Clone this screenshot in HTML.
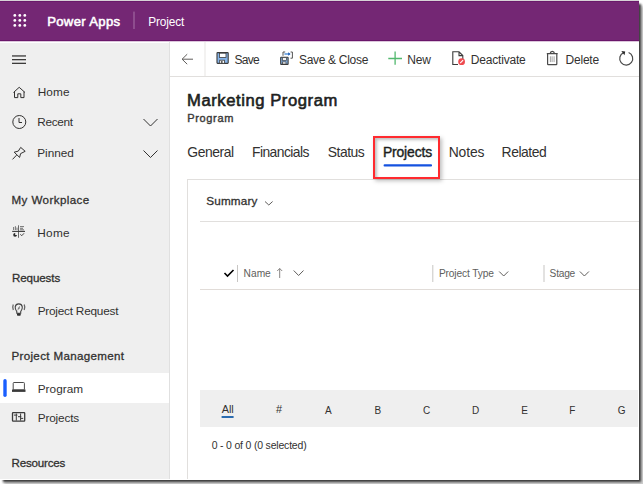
<!DOCTYPE html>
<html><head><meta charset="utf-8">
<style>
*{margin:0;padding:0;box-sizing:border-box}
html,body{width:643px;height:484px;overflow:hidden;background:#fff}
body{font-family:"Liberation Sans",sans-serif;position:relative;color:#323130}
.a{position:absolute;white-space:nowrap}
.tx{line-height:1}
.bl{display:inline-block;width:0;height:0}
svg{overflow:visible}
/*MEASURE*/
</style></head><body>
<!-- page shadow -->
<div class="a nt" style="left:4px;top:6px;width:643px;height:484px;background:#cdcdcd;filter:blur(1.5px)"></div>
<div class="a nt" style="left:3px;top:4px;width:638px;height:478px;background:#383838;filter:blur(1.2px)"></div>
<div class="a" style="left:0;top:0;width:639px;height:480px;background:#fff"></div>
<!-- backgrounds -->
<div class="a" style="left:0;top:0;width:639px;height:1px;background:#d6d2d6"></div>
<div class="a" style="left:0;top:1px;width:639px;height:40px;background:#742774"></div>
<div class="a" style="left:0;top:1px;width:639px;height:1px;background:#6a1a6a"></div>
<div class="a" style="left:0;top:40px;width:639px;height:1px;background:#6a166a"></div>
<div class="a" style="left:0;top:41px;width:639px;height:1px;background:#dcc6dc"></div>
<div class="a" style="left:0;top:43px;width:170px;height:436px;background:#efefef"></div>
<div class="a" style="left:169px;top:42px;width:1px;height:437px;background:#e0e0e0"></div>
<div class="a" style="left:0;top:373px;width:169px;height:30px;background:#fff"></div>
<div class="a" style="left:200px;top:390px;width:438px;height:37px;background:#efefef"></div>

<!-- non-text -->
<div class="nt">
<svg class="a" style="left:0;top:0" width="643" height="484" viewBox="0 0 643 484">
 <!-- waffle -->
 <g fill="#fff">
  <circle cx="14.8" cy="15.4" r="1.4"/><circle cx="19.8" cy="15.4" r="1.4"/><circle cx="24.8" cy="15.4" r="1.4"/>
  <circle cx="14.8" cy="20.4" r="1.4"/><circle cx="19.8" cy="20.4" r="1.4"/><circle cx="24.8" cy="20.4" r="1.4"/>
  <circle cx="14.8" cy="25.4" r="1.4"/><circle cx="19.8" cy="25.4" r="1.4"/><circle cx="24.8" cy="25.4" r="1.4"/>
 </g>
 <rect x="133.3" y="11.6" width="1.4" height="17.4" fill="#9a5f9a"/>
 <!-- hamburger -->
 <g fill="#3b3a39">
  <rect x="12" y="55.3" width="14" height="1.3"/><rect x="12" y="59" width="14" height="1.3"/><rect x="12" y="62.7" width="14" height="1.3"/>
 </g>
 <g fill="none" stroke="#323130" stroke-width="1">
  <!-- home -->
  <path d="M13.5 92.5 L19.2 87.3 L25 92.5 M14.5 91.7 V97.6 H17.8 V93.8 H20.8 V97.6 H24 V91.7"/>
  <!-- clock -->
  <circle cx="19.3" cy="122" r="6.5"/>
  <path d="M19 118 V122.5 H22"/>
  <!-- sidebar chevrons -->
  <path d="M143.5 119 L150.5 126 L157.5 119"/>
  <path d="M143.5 150.5 L150.5 157.5 L157.5 150.5"/>
  <!-- pin -->
  <path d="M20.7 147.4 L25.2 151.3 L20.6 153.6 L19.6 157.4 L14.2 152.2 L18.3 151.1 Z M16.6 155.1 L12.5 159.4"/>
  <!-- workplace home icon -->
  <path d="M18.5 225.3 V237.8" stroke="#6a6a6a" stroke-width="1"/>
  <path d="M12.2 231.4 H25" stroke="#3a3a3a" stroke-width="1.1"/>
  <path d="M13.6 230 V227 M15.4 230 V226.2 M17 230 V227.6 M20 226.6 H24 M20 228.3 H23 M20 229.8 H24" stroke="#666" stroke-width="0.9"/>
  <path d="M20.3 234.4 L21.8 235.7 L24 233.3" stroke="#444" stroke-width="1"/>
 </g>
 <path d="M15.2 233 A1.9 1.9 0 1 0 17 235 H15.2 Z" fill="#2a2a2a"/>
 <!-- lightbulb -->
 <g fill="none" stroke="#444" stroke-width="1.1">
  <path d="M16.8 311.6 Q15 309.6 15.2 306.9 A3.6 3.6 0 0 1 22.3 306.9 Q22.5 309.6 20.7 311.6 V313.2 H16.8 Z"/>
  <path d="M18.2 308.8 L19.6 306.4 M17.6 309.8 L20 307.6" stroke="#555" stroke-width="0.8"/>
  <path d="M13.3 304.6 Q12.1 307.3 13.3 310 M24.2 304.6 Q25.4 307.3 24.2 310" stroke="#666" stroke-width="1.3"/>
 </g>
 <rect x="17" y="313.3" width="3.7" height="2.4" rx="0.8" fill="#2f2f2f"/>
 <!-- laptop -->
 <rect x="13.2" y="382.5" width="11.2" height="7.5" rx="0.8" fill="none" stroke="#4a4a4a" stroke-width="1"/>
 <rect x="12" y="389.5" width="13.5" height="2.4" fill="#3a3a3a"/>
 <!-- projects board -->
 <g fill="none" stroke="#3b3b3b">
  <rect x="12.5" y="412.7" width="12.2" height="8.5" rx="0.6" stroke-width="1.3"/>
  <path d="M16.3 413.5 V420.6 M20.6 413.5 V420.6 M13.9 415.1 H17.4 M18 416.7 H21.3 M20.8 418.4 H23.2" stroke-width="1"/>
 </g>
 <!-- back arrow -->
 <path d="M182 59.2 H193 M187.2 54.2 L182.1 59.2 L187.2 64.2" fill="none" stroke="#605e5c" stroke-width="1"/>
 <!-- command bar lines -->
 <rect x="204.5" y="42" width="1" height="34" fill="#e8e6e4"/>
 <rect x="170" y="76" width="469" height="1" fill="#e1dfdd"/>
 <!-- save icon -->
 <rect x="217" y="52.6" width="11.2" height="10.8" rx="0.6" fill="#87b5ea" stroke="#3b3b3b" stroke-width="1.1"/>
 <rect x="219.4" y="53.2" width="6.6" height="4.2" fill="#fff" stroke="#3b3b3b" stroke-width="0.8"/>
 <rect x="219.7" y="60.2" width="4.8" height="3.1" fill="#fff" stroke="#3b3b3b" stroke-width="0.8"/>
 <rect x="221.2" y="61" width="1.3" height="2.3" fill="#3b3b3b"/>
 <!-- save & close icon -->
 <rect x="280.7" y="57.2" width="7.4" height="7.2" rx="0.5" fill="#87b5ea" stroke="#3b3b3b" stroke-width="1.1"/>
 <rect x="282.4" y="57.7" width="4" height="2.6" fill="#fff" stroke="#3b3b3b" stroke-width="0.7"/>
 <rect x="282.4" y="61.9" width="3.6" height="2.1" fill="#fff" stroke="#3b3b3b" stroke-width="0.7"/>
 <path d="M283 55.8 V52 H285.2 M290.6 52 H292.4 V58.2 H290.5" fill="none" stroke="#555" stroke-width="1"/>
 <path d="M284.4 54 H289.6" fill="none" stroke="#2b78d0" stroke-width="1.2"/>
 <path d="M288.2 52.2 L290.6 54 L288.2 55.8 Z" fill="#1f5fb8"/>
 <!-- plus -->
 <path d="M388.3 58.5 H402 M395.1 51.6 V64.8" stroke="#52b86e" stroke-width="1.3"/>
 <!-- deactivate icon -->
 <path d="M458 64.5 H452.8 V51.8 H459 L462.8 55.6 V59 M459 51.8 V55.6 H462.8" fill="none" stroke="#3b3b3b" stroke-width="1.1"/>
 <circle cx="461.6" cy="61.7" r="3.4" fill="#ee4b50"/>
 <path d="M460.2 63.2 L463.1 60.2" stroke="#fff" stroke-width="1.1"/>
 <!-- delete icon -->
 <path d="M546.8 53.6 H557.7 M550.2 53.4 Q550.4 51.3 552.3 51.3 Q554.2 51.3 554.4 53.4 M547.6 53.8 V64 Q547.6 64.6 548.2 64.6 H556.2 Q556.8 64.6 556.8 64 V53.8" fill="none" stroke="#4a4a4a" stroke-width="1.2"/>
 <path d="M550.4 56.3 V62.1 M552.1 56.3 V62.1 M554.1 56.3 V62.1" fill="none" stroke="#999" stroke-width="0.9"/>
 <!-- refresh -->
 <path d="M623.6 52.6 A6.5 6.5 0 1 0 628.6 52.5" fill="none" stroke="#4a4a4a" stroke-width="1.2"/>
 <polygon points="621.3,51.1 625.2,51.5 624.5,55.3" fill="#2a2a2a"/>

 <!-- projects underline -->
 <path d="M384.6 165.4 H431" stroke="#1452e0" stroke-width="2.1" stroke-linecap="round"/>

 <!-- card -->
 <rect x="187" y="179" width="452" height="1" fill="#e1dfdd"/>
 <rect x="187" y="179" width="1" height="300" fill="#e1dfdd"/>
 <rect x="200" y="221" width="439" height="1" fill="#e1dfdd"/>
 <path d="M265 201.5 L268.8 205 L272.6 201.5" fill="none" stroke="#605e5c" stroke-width="1"/>
 <!-- grid header -->
 <path d="M224.5 273 L227.5 276 L233.5 270" fill="none" stroke="#000" stroke-width="1.6"/>
 <rect x="237" y="265" width="1" height="17" fill="#c8c6c4"/>
 <rect x="432.3" y="265" width="1" height="17" fill="#c8c6c4"/>
 <rect x="543.5" y="265" width="1" height="17" fill="#c8c6c4"/>
 <path d="M279.7 268.5 V278 M277.2 271 L279.7 268.5 L282.2 271" fill="none" stroke="#7a7876" stroke-width="0.9"/>
 <path d="M293.7 270.5 L298.6 275.5 L303.5 270.5" fill="none" stroke="#605e5c" stroke-width="1"/>
 <path d="M499.2 271.5 L503.7 276 L508.2 271.5" fill="none" stroke="#605e5c" stroke-width="1"/>
 <path d="M579.9 271.5 L584.4 276 L588.9 271.5" fill="none" stroke="#605e5c" stroke-width="1"/>
 <rect x="200" y="289" width="439" height="1" fill="#e1dcd8"/>
 <!-- All underline -->
 <rect x="221.6" y="416" width="12" height="2" fill="#2b6cb0"/>
 <!-- sidebar selection bar -->
 <rect x="3.3" y="379" width="3.4" height="18" rx="1.7" fill="#1a5fff"/>
</svg>
<!-- red annotation box -->
<div class="a" style="left:373px;top:136px;width:67.2px;height:42.6px;border:2.9px solid #ff2a2f;box-shadow:inset 2px 2px 3px rgba(0,0,0,0.25),2px 2px 4px rgba(0,0,0,0.25)"></div>
</div>
<div class="a tx" id="t_pa" style="left:47.15px;top:15.21px;font-size:13.13px;letter-spacing:0.325px;color:#ffffff;-webkit-text-stroke:0.55px #ffffff">Power Apps<span class="bl"></span></div>
<div class="a tx" id="t_proj" style="left:148.15px;top:17.31px;font-size:11.87px;letter-spacing:-0.136px;color:#ffffff">Project<span class="bl"></span></div>
<div class="a tx" id="s_home" style="left:37.67px;top:87.41px;font-size:11.80px;letter-spacing:0.119px;color:#323130">Home<span class="bl"></span></div>
<div class="a tx" id="s_recent" style="left:37.28px;top:117.00px;font-size:11.80px;letter-spacing:-0.340px;color:#323130">Recent<span class="bl"></span></div>
<div class="a tx" id="s_pinned" style="left:37.28px;top:148.00px;font-size:11.80px;letter-spacing:-0.060px;color:#323130">Pinned<span class="bl"></span></div>
<div class="a tx" id="s_myw" style="left:11.52px;top:194.00px;font-size:11.60px;letter-spacing:0.411px;color:#323130;-webkit-text-stroke:0.3px #323130">My Workplace<span class="bl"></span></div>
<div class="a tx" id="s_home2" style="left:37.28px;top:227.61px;font-size:11.80px;letter-spacing:0.290px;color:#323130">Home<span class="bl"></span></div>
<div class="a tx" id="s_req" style="left:11.93px;top:272.21px;font-size:11.60px;letter-spacing:-0.093px;color:#323130;-webkit-text-stroke:0.3px #323130">Requests<span class="bl"></span></div>
<div class="a tx" id="s_preq" style="left:37.66px;top:305.51px;font-size:11.80px;letter-spacing:-0.226px;color:#323130">Project Request<span class="bl"></span></div>
<div class="a tx" id="s_pm" style="left:11.43px;top:349.61px;font-size:11.60px;letter-spacing:0.333px;color:#323130;-webkit-text-stroke:0.3px #323130">Project Management<span class="bl"></span></div>
<div class="a tx" id="s_prog" style="left:37.66px;top:383.81px;font-size:11.80px;letter-spacing:0.044px;color:#323130">Program<span class="bl"></span></div>
<div class="a tx" id="s_projs" style="left:37.66px;top:413.31px;font-size:11.80px;letter-spacing:-0.145px;color:#323130">Projects<span class="bl"></span></div>
<div class="a tx" id="s_res" style="left:11.57px;top:457.21px;font-size:11.60px;letter-spacing:-0.196px;color:#323130;-webkit-text-stroke:0.3px #323130">Resources<span class="bl"></span></div>
<div class="a tx" id="c_save" style="left:234.56px;top:53.81px;font-size:12.00px;letter-spacing:-0.765px;color:#323130">Save<span class="bl"></span></div>
<div class="a tx" id="c_sc" style="left:298.93px;top:53.81px;font-size:12.00px;letter-spacing:-0.299px;color:#323130">Save &amp; Close<span class="bl"></span></div>
<div class="a tx" id="c_new" style="left:407.25px;top:53.81px;font-size:12.00px;letter-spacing:-0.204px;color:#323130">New<span class="bl"></span></div>
<div class="a tx" id="c_deact" style="left:470.81px;top:53.81px;font-size:12.00px;letter-spacing:-0.196px;color:#323130">Deactivate<span class="bl"></span></div>
<div class="a tx" id="c_del" style="left:565.42px;top:53.81px;font-size:12.00px;letter-spacing:-0.178px;color:#323130">Delete<span class="bl"></span></div>
<div class="a tx" id="h_title" style="left:187.07px;top:93.21px;font-size:16.62px;letter-spacing:0.561px;color:#201f1e;-webkit-text-stroke:0.6px #201f1e">Marketing Program<span class="bl"></span></div>
<div class="a tx" id="h_sub" style="left:187.31px;top:112.50px;font-size:11.03px;letter-spacing:0.631px;color:#3b3a39;-webkit-text-stroke:0.4px #3b3a39">Program<span class="bl"></span></div>
<div class="a tx" id="tb_gen" style="left:187.32px;top:145.81px;font-size:13.90px;letter-spacing:-0.453px;color:#323130">General<span class="bl"></span></div>
<div class="a tx" id="tb_fin" style="left:252.06px;top:145.81px;font-size:13.90px;letter-spacing:-0.579px;color:#323130">Financials<span class="bl"></span></div>
<div class="a tx" id="tb_sta" style="left:327.87px;top:145.81px;font-size:13.90px;letter-spacing:-0.502px;color:#323130">Status<span class="bl"></span></div>
<div class="a tx" id="tb_pro" style="left:382.90px;top:145.81px;font-size:13.90px;letter-spacing:-0.137px;color:#201f1e;-webkit-text-stroke:0.4px #201f1e">Projects<span class="bl"></span></div>
<div class="a tx" id="tb_not" style="left:448.66px;top:145.81px;font-size:13.90px;letter-spacing:-0.128px;color:#323130">Notes<span class="bl"></span></div>
<div class="a tx" id="tb_rel" style="left:501.58px;top:145.81px;font-size:13.90px;letter-spacing:-0.447px;color:#323130">Related<span class="bl"></span></div>
<div class="a tx" id="g_sum" style="left:206.36px;top:195.40px;font-size:11.73px;letter-spacing:0.135px;color:#323130;-webkit-text-stroke:0.3px #323130">Summary<span class="bl"></span></div>
<div class="a tx" id="g_name" style="left:243.61px;top:268.81px;font-size:10.20px;letter-spacing:-0.003px;color:#605e5c">Name<span class="bl"></span></div>
<div class="a tx" id="g_pt" style="left:438.93px;top:268.81px;font-size:10.20px;letter-spacing:-0.134px;color:#605e5c">Project Type<span class="bl"></span></div>
<div class="a tx" id="g_st" style="left:549.62px;top:268.81px;font-size:10.20px;letter-spacing:-0.249px;color:#605e5c">Stage<span class="bl"></span></div>
<div class="a tx" id="j_all" style="left:221.82px;top:403.60px;font-size:10.90px;letter-spacing:-0.100px;color:#323130">All<span class="bl"></span></div>
<div class="a tx" id="j_h" style="left:276.08px;top:403.60px;font-size:10.90px;letter-spacing:0.000px;color:#323130">#<span class="bl"></span></div>
<div class="a tx" id="j_a" style="left:324.88px;top:405.90px;font-size:10.00px;letter-spacing:0.000px;color:#323130">A<span class="bl"></span></div>
<div class="a tx" id="j_b" style="left:374.48px;top:405.90px;font-size:10.00px;letter-spacing:0.000px;color:#323130">B<span class="bl"></span></div>
<div class="a tx" id="j_c" style="left:423.02px;top:405.90px;font-size:10.00px;letter-spacing:0.000px;color:#323130">C<span class="bl"></span></div>
<div class="a tx" id="j_d" style="left:471.91px;top:405.90px;font-size:10.00px;letter-spacing:0.000px;color:#323130">D<span class="bl"></span></div>
<div class="a tx" id="j_e" style="left:521.36px;top:405.90px;font-size:10.00px;letter-spacing:0.000px;color:#323130">E<span class="bl"></span></div>
<div class="a tx" id="j_f" style="left:569.36px;top:405.90px;font-size:10.00px;letter-spacing:0.000px;color:#323130">F<span class="bl"></span></div>
<div class="a tx" id="j_g" style="left:617.70px;top:405.90px;font-size:10.00px;letter-spacing:0.000px;color:#323130">G<span class="bl"></span></div>
<div class="a tx" id="f_cnt" style="left:211.72px;top:440.61px;font-size:10.47px;letter-spacing:-0.182px;color:#323130">0 - 0 of 0 (0 selected)<span class="bl"></span></div>
</body></html>
